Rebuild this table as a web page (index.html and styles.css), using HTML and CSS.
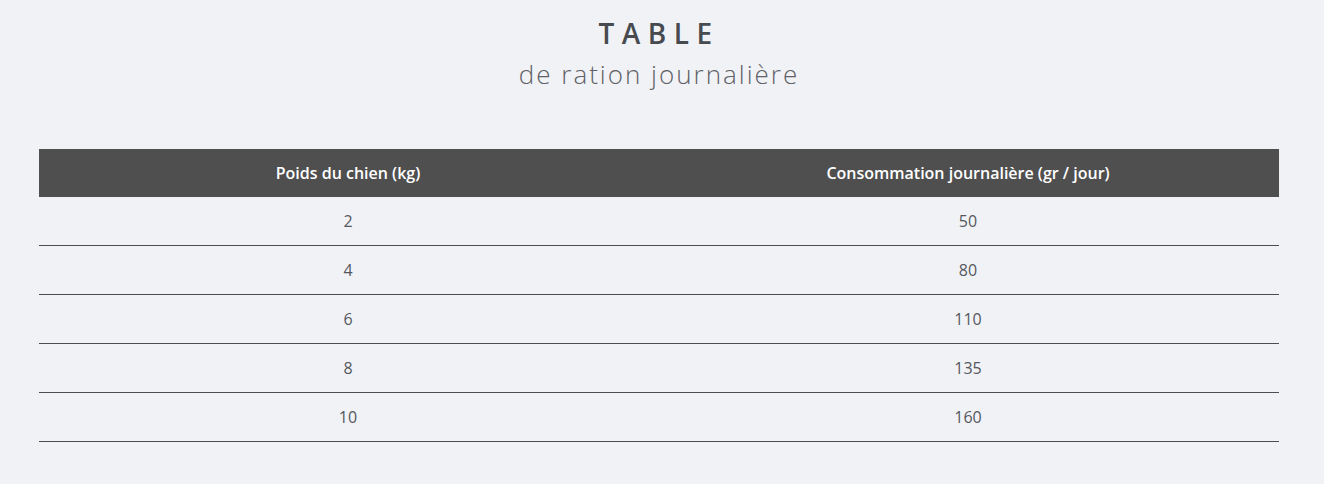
FILE: index.html
```html
<!DOCTYPE html>
<html lang="fr">
<head>
<meta charset="utf-8">
<link rel="stylesheet" href="styles.css">
</head>
<body>
<div class="wrap">
  <header class="heading">
    <h1 class="title">TABLE</h1>
    <h2 class="subtitle">de ration journalière</h2>
  </header>
  <table class="ration">
    <thead>
      <tr><th>Poids du chien (kg)</th><th>Consommation journalière (gr / jour)</th></tr>
    </thead>
    <tbody>
      <tr><td>2</td><td>50</td></tr>
      <tr><td>4</td><td>80</td></tr>
      <tr><td>6</td><td>110</td></tr>
      <tr><td>8</td><td>135</td></tr>
      <tr><td>10</td><td>160</td></tr>
    </tbody>
  </table>
</div>
</body>
</html>
```
FILE: styles.css
```css
html, body {
  margin: 0;
  padding: 0;
  background: #f1f2f6;
  font-family: "Open Sans", "Liberation Sans", sans-serif;
}
.wrap {
  width: 1240px;
  margin-left: 39px;
  padding-top: 14px;
}
.heading {
  text-align: center;
}
.title {
  margin: 0;
  font-size: 28px;
  font-weight: 600;
  letter-spacing: 7.5px;
  color: #474b50;
  line-height: 38px;
}
.subtitle {
  margin: 2px 0 0;
  font-size: 26px;
  font-weight: 300;
  letter-spacing: 2px;
  color: #5f6166;
  line-height: 40px;
}
.ration {
  margin-top: 55px;
  width: 100%;
  border-collapse: collapse;
}
.ration th {
  background: #4f4f4f;
  color: #fff;
  font-weight: 600;
  font-size: 16px;
  height: 48px;
  padding: 0;
  text-align: center;
}
.ration td {
  height: 48px;
  padding: 0;
  text-align: center;
  font-size: 16px;
  color: #55585e;
  border-bottom: 1px solid #4d4d4d;
}
.ration th:first-child, .ration td:first-child {
  width: 618px;
}
```
